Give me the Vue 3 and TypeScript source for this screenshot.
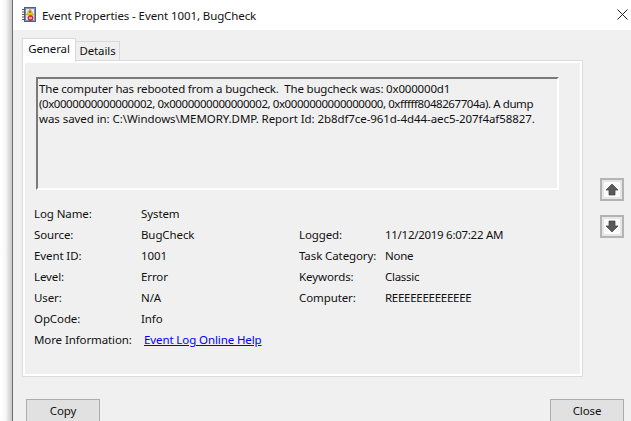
<script setup lang="ts">
interface Row { label: string; value: string; label2?: string; value2?: string }
const rows: Row[] = [
  { label: 'Log Name:', value: 'System' },
  { label: 'Source:', value: 'BugCheck', label2: 'Logged:', value2: '11/12/2019 6:07:22 AM' },
  { label: 'Event ID:', value: '1001', label2: 'Task Category:', value2: 'None' },
  { label: 'Level:', value: 'Error', label2: 'Keywords:', value2: 'Classic' },
  { label: 'User:', value: 'N/A', label2: 'Computer:', value2: 'REEEEEEEEEEEEE' },
  { label: 'OpCode:', value: 'Info' },
]
</script>

<template>
  <div class="screen">
    <div class="shadow"></div>
    <div class="window">
      <header class="titlebar">
        <svg class="app-icon" width="14" height="15" viewBox="0 0 14 15">
          <rect x="2.5" y="0.5" width="11" height="14" fill="#7f93c4" stroke="#4f5f8c" />
          <rect x="4" y="2" width="8" height="11" fill="#e6ebf2" />
          <path d="M0 2.5h3.5M0 5h3.5M0 7.5h3.5M0 10h3.5M0 12.5h3.5" stroke="#555" stroke-width="1" />
          <path d="M8 1.5l3.6 6.5H4.4z" fill="#f2c81e" stroke="#b08a10" stroke-width="0.5" />
          <rect x="7.5" y="3.6" width="1" height="2.4" fill="#5a4300" />
          <circle cx="8.5" cy="11" r="2.7" fill="#d8383a" stroke="#9a2020" stroke-width="0.5" />
          <rect x="7" y="10.5" width="3" height="1" fill="#fff" />
        </svg>
        <span class="title">Event Properties - Event 1001, BugCheck</span>
        <svg class="close-x" width="11" height="11" viewBox="0 0 11 11">
          <path d="M0.5 0.5l10 10M10.5 0.5l-10 10" stroke="#222" stroke-width="1" fill="none" />
        </svg>
      </header>

      <div class="body">
        <div class="main">
          <div class="tabs-area">
            <div class="tabstrip">
              <div class="tab active">General</div>
              <div class="tab">Details</div>
            </div>
            <section class="panel">
              <div class="message">
                <div class="line l1">The computer has rebooted from a bugcheck.&nbsp; The bugcheck was: 0x000000d1</div>
                <div class="line l2">(0x0000000000000002, 0x0000000000000002, 0x0000000000000000, 0xfffff8048267704a). A dump</div>
                <div class="line l3">was saved in: C:\Windows\MEMORY.DMP. Report Id: 2b8df7ce-961d-4d44-aec5-207f4af58827.</div>
              </div>
              <div class="fields">
                <div v-for="r in rows" :key="r.label" class="row">
                  <span class="c1">{{ r.label }}</span>
                  <span class="c2">{{ r.value }}</span>
                  <span class="c3">{{ r.label2 }}</span>
                  <span class="c4">{{ r.value2 }}</span>
                </div>
                <div class="row">
                  <span class="c1">More Information:</span>
                  <a class="link">Event Log Online Help</a>
                </div>
              </div>
            </section>
          </div>
          <div class="arrows">
            <button class="arrow">
              <svg width="16" height="15" viewBox="0 0 16 15">
                <rect width="16" height="15" fill="#fbfbfb" />
                <path d="M8 2L14 8H11V13H5V8H2Z" fill="#5a5a5a" stroke="#3f3f3f" stroke-width="0.7" />
              </svg>
            </button>
            <button class="arrow">
              <svg width="16" height="15" viewBox="0 0 16 15">
                <rect width="16" height="15" fill="#fbfbfb" />
                <path d="M8 13L14 7H11V2H5V7H2Z" fill="#5a5a5a" stroke="#3f3f3f" stroke-width="0.7" />
              </svg>
            </button>
          </div>
        </div>
        <footer class="footer">
          <button class="btn">Copy</button>
          <button class="btn">Close</button>
        </footer>
      </div>
    </div>
  </div>
</template>

<style scoped>
.screen {
  width: 631px;
  height: 421px;
  display: flex;
  overflow: hidden;
  background: #fff;
  font-family: "Noto Sans", "Open Sans", sans-serif;
  font-size: 11.5px;
  letter-spacing: -0.1px;
  color: #111;
}
.shadow {
  width: 12px;
  flex: none;
  background: linear-gradient(to right, #fff 0%, #f8f8f8 45%, #c8c8c8 100%);
}
.window {
  flex: 1;
  min-width: 0;
  display: flex;
  flex-direction: column;
  border-left: 1px solid #6f6f6f;
}
.titlebar {
  height: 30px;
  flex: none;
  display: flex;
  align-items: center;
  background: #fff;
  padding-left: 9px;
}
.app-icon { flex: none; margin: -2px 6px 0 0; }
.title { flex: 1; }
.close-x { flex: none; margin: -2px 3px 0 0; }
.body {
  flex: 1;
  min-height: 0;
  display: flex;
  flex-direction: column;
  background: #f0f0f0;
}
.main { display: flex; flex: none; }
.tabs-area {
  box-sizing: border-box;
  width: 570px;
  padding: 8px 0 0 9px;
  flex: none;
}
.tabstrip {
  position: relative;
  z-index: 1;
  display: flex;
  align-items: flex-start;
  height: 22px;
}
.tab {
  box-sizing: border-box;
  height: 19px;
  margin-top: 3px;
  line-height: 18px;
  width: 44px;
  text-align: center;
  border: 1px solid #d9d9d9;
  border-bottom: none;
  border-left: none;
  background: #f0f0f0;
}
.tab.active {
  height: 24px;
  margin-top: 0;
  width: 54px;
  line-height: 19px;
  background: #fff;
  border-left: 1px solid #d9d9d9;
}
.panel {
  box-sizing: border-box;
  height: 315px;
  width: 559px;
  margin: 1px 0 0 1px;
  border: 2px solid #fff;
  box-shadow: 0 0 0 1px #dcdcdc;
  padding: 14px 21px 0 11px;
}
.message {
  box-sizing: border-box;
  height: 113px;
  border-top: 2px solid #7a7a7a;
  border-left: 2px solid #7a7a7a;
  border-right: 2px solid #fff;
  border-bottom: 2px solid #fff;
  padding: 2px 0 0 1px;
  white-space: nowrap;
}
.line { line-height: 15px; }
.l1 { letter-spacing: -0.18px; }
.l2 { letter-spacing: -0.43px; }
.l3 { letter-spacing: -0.07px; }
.fields { margin-top: 13px; margin-left: -2px; }
.row {
  display: flex;
  height: 21px;
  line-height: 21px;
  white-space: nowrap;
}
.c1 { width: 107px; flex: none; }
.c2 { width: 158px; flex: none; }
.c3 { width: 86px; flex: none; }
.c4 { flex: none; letter-spacing: -0.28px; }
.link {
  color: #0000ff;
  text-decoration: underline;
  margin-left: 3px;
  cursor: pointer;
}
.arrows {
  flex: none;
  margin-left: 17px;
  padding-top: 148px;
  display: flex;
  flex-direction: column;
  gap: 14px;
}
.arrow {
  box-sizing: border-box;
  width: 24px;
  height: 23px;
  padding: 0;
  border: 2px solid #b4b4b4;
  background: #e6e6e6;
  display: flex;
  align-items: center;
  justify-content: center;
}
.footer {
  display: flex;
  justify-content: space-between;
  padding: 23px 7px 0 13px;
}
.btn {
  box-sizing: border-box;
  width: 74px;
  height: 23px;
  padding: 0;
  border: 1px solid #adadad;
  background: #e1e1e1;
  font: inherit;
  letter-spacing: inherit;
  color: #111;
}
</style>
